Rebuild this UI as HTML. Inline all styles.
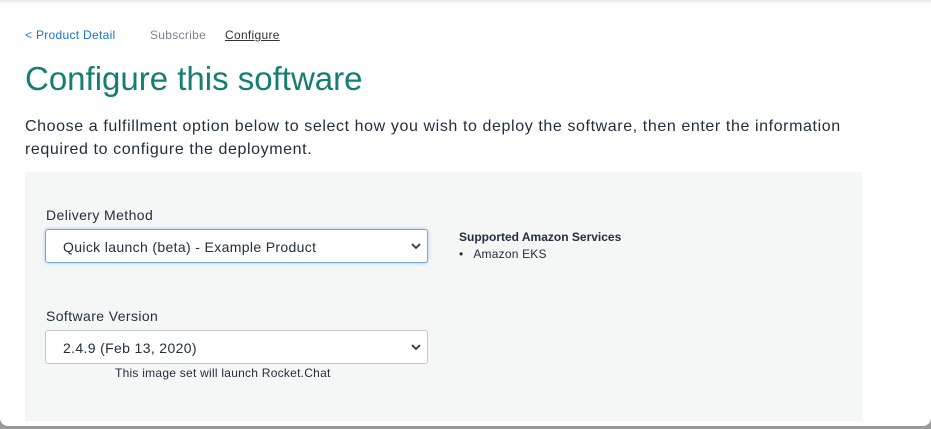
<!DOCTYPE html>
<html><head><style>
*{margin:0;padding:0;box-sizing:border-box}
html,body{width:931px;height:429px;overflow:hidden;background:#9a9a9a;font-family:"Liberation Sans",sans-serif}
.card{position:absolute;left:0;top:0;width:931px;height:426px;background:#fff;border-radius:0 0 8px 8px;box-shadow:inset 0 4px 4px -3px #ddd}
.crumb{position:absolute;top:28px;font-size:12px;letter-spacing:0.3px}
h1{position:absolute;left:25px;top:60px;font-weight:400;font-size:33px;color:#137f73;letter-spacing:0px}
.desc{position:absolute;left:25px;top:115px;width:830px;font-size:16px;line-height:23px;color:#232f3e;letter-spacing:0.6px}
.panel{position:absolute;left:25px;top:172px;width:837px;height:249px;background:#f5f6f6}
.lab{position:absolute;left:46px;font-size:14px;color:#232f3e;letter-spacing:0.4px}
.sel{position:absolute;left:45px;width:383px;height:34px;background:#fff;border:1px solid #c8c8c8;border-radius:3px;font-size:14px;color:#232f3e;padding:9px 0 0 17px;letter-spacing:0.35px}
.sel svg{position:absolute;right:6px;top:13px}
</style></head><body>
<div class="card">
<div class="crumb" style="left:25px;color:#1a73d9">&lt; Product Detail</div>
<div class="crumb" style="left:150px;color:#7b8590">Subscribe</div>
<div class="crumb" style="left:225px;color:#333;text-decoration:underline">Configure</div>
<h1>Configure this software</h1>
<div class="desc">Choose a fulfillment option below to select how you wish to deploy the software, then enter the information required to configure the deployment.</div>
<div class="panel"></div>
<div class="lab" style="top:207px">Delivery Method</div>
<div class="sel" style="top:229px;border-color:#6fa9e6;box-shadow:0 0 3px #9cc6f0">Quick launch (beta) - Example Product<svg width="10" height="7"><path d="M1 1l4 4 4-4" stroke="#333" stroke-width="1.8" fill="none"/></svg></div>
<div style="position:absolute;left:459px;top:230px;font-size:12px;font-weight:700;color:#232f3e">Supported Amazon Services</div>
<div style="position:absolute;left:459px;top:247px;font-size:12px;color:#232f3e;letter-spacing:0.2px">•&nbsp;&nbsp; Amazon EKS</div>
<div class="lab" style="top:308px">Software Version</div>
<div class="sel" style="top:330px">2.4.9 (Feb 13, 2020)<svg width="10" height="7"><path d="M1 1l4 4 4-4" stroke="#333" stroke-width="1.8" fill="none"/></svg></div>
<div style="position:absolute;left:115px;top:366px;font-size:12px;color:#232f3e;letter-spacing:0.25px">This image set will launch Rocket.Chat</div>
</div>
</body></html>
